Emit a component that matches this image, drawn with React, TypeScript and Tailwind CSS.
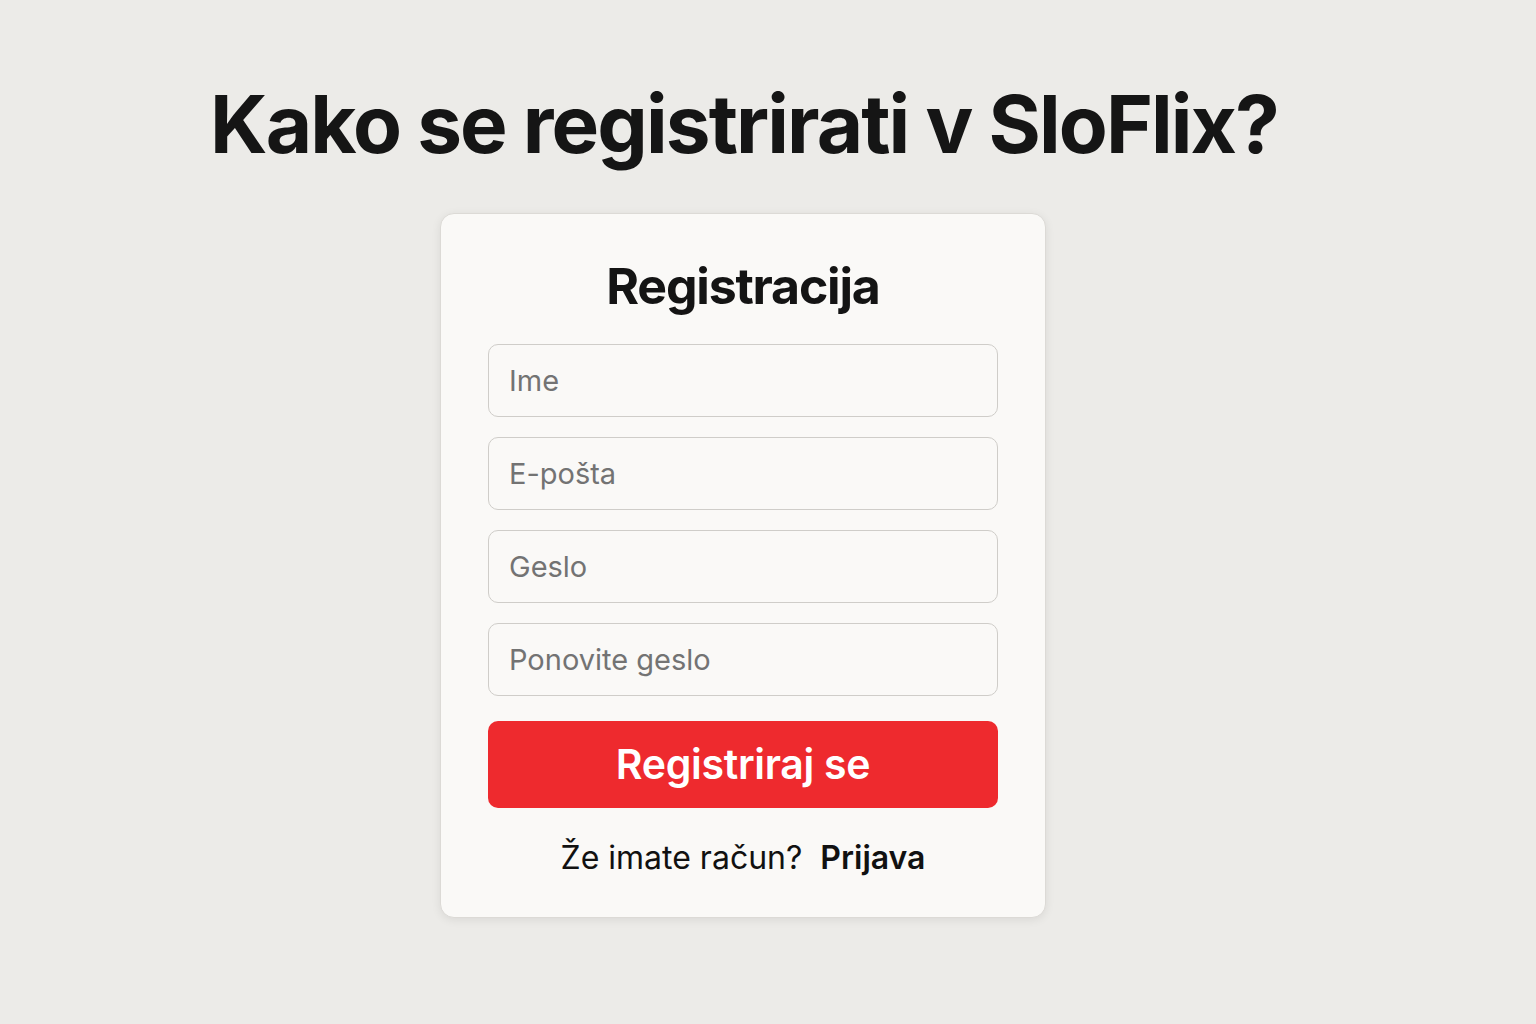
export default function App() {
  const fields = ["Ime", "E-pošta", "Geslo", "Ponovite geslo"];
  return (
    <div
      className="w-[1536px] h-[1024px] bg-[#ecebe8] flex flex-col items-center"
      style={{ fontFamily: "Inter, 'Noto Sans', sans-serif" }}
    >
      <h1 className="mt-[78px] h-[92px] pr-[48px] text-[80px] leading-[92px] font-[650] tracking-[-1.9px] text-[#151515] whitespace-nowrap">
        Kako se registrirati v SloFlix?
      </h1>
      <div className="mt-[43px] ml-[-50px] w-[606px] h-[705px] rounded-[14px] bg-[#faf9f7] border border-[#dcdad6] shadow-[0_2px_10px_rgba(0,0,0,0.08)] flex flex-col items-center px-[47px]">
        <div className="mt-[42px] text-[50px] leading-[60px] font-bold tracking-[-1.2px] text-[#141414]">
          Registracija
        </div>
        <div className="mt-[28px] w-full flex flex-col gap-[20px]">
          {fields.map((f) => (
            <div
              key={f}
              className="h-[73px] w-full rounded-[10px] border border-[#cfcdc9] bg-[#faf9f7] flex items-center px-[20px] text-[29px] text-[#737373]"
            >
              {f}
            </div>
          ))}
        </div>
        <button className="mt-[25px] w-full h-[87px] rounded-[10px] bg-[#ee2a2e] text-white text-[41px] font-semibold tracking-[-0.3px]">
          Registriraj se
        </button>
        <div className="mt-[30px] text-[32px] leading-[40px] text-[#111]">
          Že imate račun?{"\u00a0\u00a0"}<span className="font-semibold">Prijava</span>
        </div>
      </div>
    </div>
  );
}
